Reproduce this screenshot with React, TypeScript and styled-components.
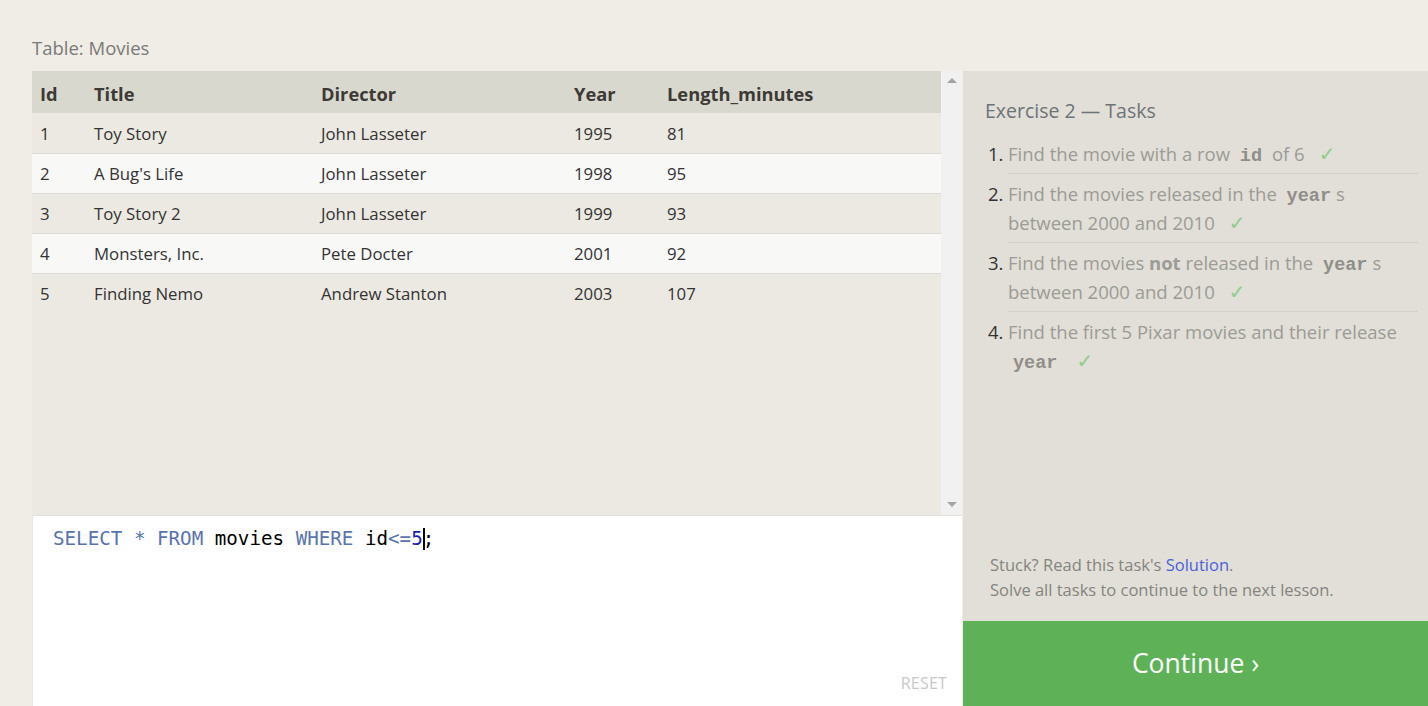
import React from "react";
import styled, { createGlobalStyle } from "styled-components";

const GlobalStyle = createGlobalStyle`
  html, body {
    margin: 0;
    padding: 0;
    height: 100%;
    background: #f0ede6;
    overflow: hidden;
  }
  body {
    font-family: "Open Sans", "Noto Sans", sans-serif;
    color: #333;
  }
`;

const Page = styled.div`
  height: 706px;
  display: flex;
  flex-direction: column;
  padding-left: 32px;
  box-sizing: border-box;
`;

const TopLabel = styled.div`
  height: 71px;
  display: flex;
  align-items: flex-end;
  padding-bottom: 11px;
  box-sizing: border-box;
  font-size: 18.5px;
  color: #7a7a78;
`;

const Main = styled.div`
  flex: 1;
  display: flex;
  min-height: 0;
`;

const LeftColumn = styled.div`
  width: 930px;
  display: flex;
  flex-direction: column;
`;

const TableArea = styled.div`
  height: 444px;
  display: flex;
  background: #ebe9e1;
  border-bottom: 1px solid #e2e0d8;
`;

const TableScroll = styled.div`
  flex: 1;
`;

const Table = styled.table`
  width: 100%;
  border-collapse: collapse;
  font-size: 16.8px;
`;

const HeadCell = styled.th<{ $w?: number }>`
  text-align: left;
  font-weight: 700;
  color: #3d3a36;
  background: #d9d8cf;
  height: 42px;
  padding: 3px 8px 0;
  width: ${(p) => (p.$w ? `${p.$w}px` : "auto")};
  box-sizing: border-box;
  font-size: 18.3px;
`;

const Row = styled.tr<{ $alt: boolean }>`
  background: ${(p) => (p.$alt ? "#f8f8f7" : "#ebe9e1")};
  border-bottom: 1px solid #dcdbd5;
  &:last-child {
    border-bottom: none;
  }
`;

const Cell = styled.td`
  height: 40px;
  box-sizing: border-box;
  padding: 1px 8px 0;
  color: #333;
`;

const Scrollbar = styled.div`
  width: 21px;
  background: #f1f1f1;
  display: flex;
  flex-direction: column;
  justify-content: space-between;
  align-items: center;
  padding: 7px 0 8px;
  box-sizing: border-box;
`;

const Arrow = styled.div<{ $down?: boolean }>`
  width: 0;
  height: 0;
  border-left: 5px solid transparent;
  border-right: 5px solid transparent;
  ${(p) =>
    p.$down
      ? "border-top: 5px solid #a3a3a3;"
      : "border-bottom: 5px solid #a3a3a3;"}
`;

const Editor = styled.div`
  flex: 1;
  background: #fff;
  position: relative;
  padding: 11px 20px;
  border-left: 1px solid #e8e6df;
`;

const Code = styled.div`
  font-family: "DejaVu Sans Mono", "Liberation Mono", monospace;
  font-size: 19.2px;
  line-height: 24px;
  color: #000;
  white-space: pre;
`;

const Kw = styled.span`
  color: #5a73ad;
`;

const Num = styled.span`
  color: #1c1cb0;
`;

const Caret = styled.span`
  display: inline-block;
  width: 2px;
  height: 22px;
  background: #000;
  vertical-align: -5px;
  margin-right: -2px;
`;

const ResetButton = styled.div`
  position: absolute;
  right: 15px;
  bottom: 12px;
  font-size: 16px;
  color: #c8c8c8;
  letter-spacing: 0.2px;
`;

const RightPanel = styled.div`
  flex: 1;
  margin-left: 1px;
  background: #e1dfd7;
  display: flex;
  flex-direction: column;
`;

const Tasks = styled.div`
  padding: 26px 10px 0 22px;
`;

const TasksTitle = styled.div`
  font-size: 19.5px;
  color: #6e7378;
  margin-bottom: 15px;
`;

const TaskList = styled.ol`
  list-style: none;
  margin: 0;
  padding: 0;
`;

const TaskItem = styled.li`
  display: flex;
  font-size: 18.5px;
  line-height: 29px;
`;

const TaskNumber = styled.span`
  width: 23px;
  padding-left: 3px;
  box-sizing: border-box;
  color: #333;
  flex-shrink: 0;
`;

const TaskText = styled.div<{ $last?: boolean }>`
  flex: 1;
  color: #9c9b96;
  padding: 0 0 5px;
  margin-bottom: 5px;
  border-bottom: ${(p) => (p.$last ? "none" : "1px solid #d2d0c7")};
`;

const Mono = styled.code`
  font-family: "Liberation Mono", "DejaVu Sans Mono", monospace;
  font-weight: 700;
  font-size: 18.5px;
  line-height: 1;
  color: #8f8e8a;
  padding: 0 5px;
`;

const Check = styled.span`
  font-family: "DejaVu Sans", sans-serif;
  font-size: 20px;
  line-height: 1;
  color: #93cc8d;
  margin-left: 14px;
`;

const Footer = styled.div`
  margin-top: auto;
  padding: 0 20px 19px 27px;
  font-size: 16.5px;
  line-height: 25px;
  color: #858480;
`;

const SolutionLink = styled.a`
  color: #4b5fd8;
  text-decoration: none;
`;

const ContinueButton = styled.div`
  height: 85px;
  background: #5eb157;
  color: #fff;
  font-size: 26.5px;
  display: flex;
  align-items: center;
  justify-content: center;
  padding-bottom: 2px;
  box-sizing: border-box;
`;

const columns = [
  { name: "Id", w: 54 },
  { name: "Title", w: 227 },
  { name: "Director", w: 253 },
  { name: "Year", w: 93 },
  { name: "Length_minutes" },
];

const movies = [
  [1, "Toy Story", "John Lasseter", 1995, 81],
  [2, "A Bug's Life", "John Lasseter", 1998, 95],
  [3, "Toy Story 2", "John Lasseter", 1999, 93],
  [4, "Monsters, Inc.", "Pete Docter", 2001, 92],
  [5, "Finding Nemo", "Andrew Stanton", 2003, 107],
];

export default function App() {
  return (
    <>
      <GlobalStyle />
      <Page>
        <TopLabel>Table: Movies</TopLabel>
        <Main>
          <LeftColumn>
            <TableArea>
              <TableScroll>
                <Table>
                  <thead>
                    <tr>
                      {columns.map((c) => (
                        <HeadCell key={c.name} $w={c.w}>
                          {c.name}
                        </HeadCell>
                      ))}
                    </tr>
                  </thead>
                  <tbody>
                    {movies.map((m, i) => (
                      <Row key={m[0]} $alt={i % 2 === 1}>
                        {m.map((v, j) => (
                          <Cell key={j}>{v}</Cell>
                        ))}
                      </Row>
                    ))}
                  </tbody>
                </Table>
              </TableScroll>
              <Scrollbar>
                <Arrow />
                <Arrow $down />
              </Scrollbar>
            </TableArea>
            <Editor>
              <Code>
                <Kw>SELECT</Kw> <Kw>*</Kw> <Kw>FROM</Kw> movies <Kw>WHERE</Kw> id
                <Kw>&lt;=</Kw>
                <Num>5</Num>
                <Caret />;
              </Code>
              <ResetButton>RESET</ResetButton>
            </Editor>
          </LeftColumn>
          <RightPanel>
            <Tasks>
              <TasksTitle>Exercise 2 — Tasks</TasksTitle>
              <TaskList>
                <TaskItem>
                  <TaskNumber>1.</TaskNumber>
                  <TaskText>
                    Find the movie with a row <Mono>id</Mono> of 6
                    <Check>✓</Check>
                  </TaskText>
                </TaskItem>
                <TaskItem>
                  <TaskNumber>2.</TaskNumber>
                  <TaskText>
                    Find the movies released in the <Mono>year</Mono>s between
                    2000 and 2010
                    <Check>✓</Check>
                  </TaskText>
                </TaskItem>
                <TaskItem>
                  <TaskNumber>3.</TaskNumber>
                  <TaskText>
                    Find the movies <b>not</b> released in the{" "}
                    <Mono>year</Mono>s between 2000 and 2010
                    <Check>✓</Check>
                  </TaskText>
                </TaskItem>
                <TaskItem>
                  <TaskNumber>4.</TaskNumber>
                  <TaskText $last>
                    Find the first 5 Pixar movies and their release{" "}
                    <Mono>year</Mono>
                    <Check>✓</Check>
                  </TaskText>
                </TaskItem>
              </TaskList>
            </Tasks>
            <Footer>
              Stuck? Read this task's <SolutionLink>Solution</SolutionLink>.
              <br />
              Solve all tasks to continue to the next lesson.
            </Footer>
            <ContinueButton>Continue ›</ContinueButton>
          </RightPanel>
        </Main>
      </Page>
    </>
  );
}
